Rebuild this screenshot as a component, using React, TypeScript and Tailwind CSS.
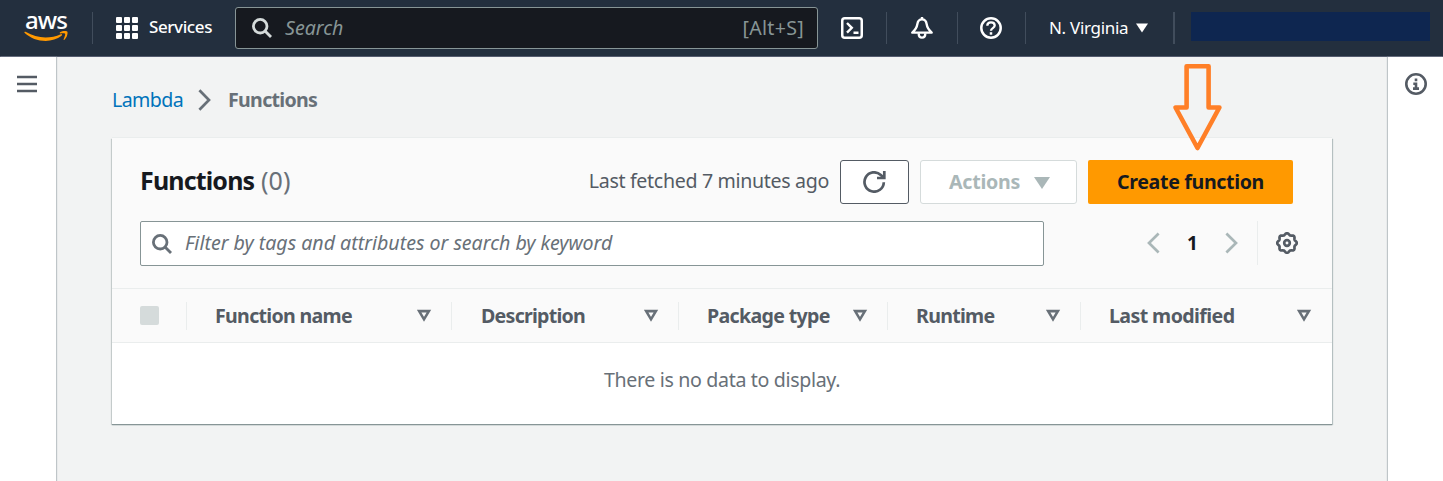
import React from 'react';

const SearchIcon = ({ className }: { className: string }) => (
  <svg className={className} width="20" height="20" viewBox="0 0 20 20" fill="none" stroke="currentColor" strokeWidth="2.8">
    <circle cx="8.2" cy="8.2" r="6.8" />
    <path d="M13 13l6 6" />
  </svg>
);

const Divider = () => <span className="h-8 w-px shrink-0 bg-[#414d5c]" />;

const columns = [
  { label: 'Function name', cell: 'w-[265px] border-r pr-[19px]', text: 'tracking-[-0.7px]' },
  { label: 'Description', cell: 'w-[227px] border-r pr-[19px]', text: 'pl-px tracking-[-0.75px]' },
  { label: 'Package type', cell: 'w-[209px] border-r pr-[19px]', text: 'tracking-[-0.67px]' },
  { label: 'Runtime', cell: 'w-[193px] border-r pr-[19px]', text: 'tracking-[-0.72px]' },
  { label: 'Last modified', cell: 'flex-1 pr-5', text: 'tracking-[-0.6px]' },
];

const gearPath = (() => {
  const points: string[] = [];
  for (let i = 0; i <= 144; i++) {
    const a = (i / 144) * Math.PI * 2;
    const r = 9 + 0.8 * Math.cos(a * 8);
    points.push(`${(11 + r * Math.sin(a)).toFixed(2)} ${(11 - r * Math.cos(a)).toFixed(2)}`);
  }
  return `M${points.join('L')}Z`;
})();

function Header() {
  return (
    <header className="flex h-[57px] shrink-0 items-center border-b border-[#545b6e] bg-[#232f3e] text-white">
      <div className="mb-[5px] ml-6 flex w-11 shrink-0 flex-col items-center">
        <span className="h-[22px] text-[24px] leading-[22px] font-medium tracking-[-0.9px]">aws</span>
        <svg width="44" height="11" viewBox="0 0 44 11" fill="#f90">
          <path d="M.4 1.2C.8.6 1.4.8 2 1.1 8 4.600 14.500 6.500 21.500 6.500c5.300 0 10.500-1.200 15.300-3.300 1-.4 1.800.7.8 1.500C33.300 8 27.300 9.900 21.800 9.900 13.700 9.900 6.300 6.900.7 1.900.4 1.600.3 1.400.4 1.200z" />
          <path d="M36 1.300C38 .1 41-.3 43.200.4c.8.500.5 5.600-2.800 8.300-.5.4-1 .2-.8-.4.8-1.900 2-4.700 1.500-5.500-.6-.8-3.300-.6-4.800-.4-.6 0-.8-.7-.3-1.100z" />
        </svg>
      </div>
      <span className="ml-6 h-8 w-px shrink-0 bg-[#414d5c]" />
      <svg className="ml-[23px] shrink-0" width="22" height="22" fill="currentColor">
        {[0, 8, 16].map((y) => [0, 8, 16].map((x) => <rect key={`${x}-${y}`} x={x} y={y} width="6" height="6" rx="1" />))}
      </svg>
      <span className="mb-[2px] ml-[11px] w-[86px] shrink-0 text-[17px] font-medium tracking-[-0.4px] whitespace-nowrap">Services</span>
      <div className="flex h-[42px] w-[583px] shrink-0 items-center rounded-[3px] border border-[#879596] bg-[#16191f] px-4">
        <SearchIcon className="text-[#d5dbdb]" />
        <span className="ml-[13px] flex-1 text-[19.600px] text-[#879596] italic">Search</span>
        <span className="-mr-[3px] text-[19.600px] tracking-[0.3px] text-[#879596]">[Alt+S]</span>
      </div>
      <svg className="mr-[23px] ml-[23px] shrink-0" width="22" height="22" viewBox="0 0 22 22" fill="none" stroke="currentColor" strokeWidth="2.500">
        <rect x="1.250" y="1.250" width="19.500" height="19.500" rx="2.500" />
        <path d="M6 6l4.800 4.800L6 15.600M12.500 15.700h5" strokeWidth="2.400" />
      </svg>
      <Divider />
      <svg className="mr-6 ml-6 shrink-0" width="22" height="22" viewBox="0 0 22 22" fill="none" stroke="currentColor" strokeWidth="2.400" strokeLinejoin="round">
        <path d="M11 0v3" />
        <path d="M11 2.400c-2.800 0-4.200 1.900-4.600 4.500C5.900 10.500 4.800 12.500 1.300 15.600h19.400c-3.500-3.100-4.600-5.100-5.100-8.700-.4-2.600-1.800-4.500-4.600-4.500z" />
        <path d="M7.700 16.200c0 2.700 1.300 4.400 3.300 4.400s3.300-1.700 3.300-4.400" />
      </svg>
      <Divider />
      <svg className="mr-[23px] ml-[22px] shrink-0" width="22" height="22" viewBox="0 0 22 22" fill="none" stroke="currentColor" strokeWidth="2.500">
        <circle cx="11" cy="11" r="9.700" />
        <path d="M7.300 8.800c0-2.200 1.500-3.400 3.700-3.400s3.700 1.200 3.700 3.100c0 2.700-3.700 2.500-3.700 5.200" strokeWidth="2.300" />
        <path d="M11 15.200v2.500" />
      </svg>
      <Divider />
      <span className="ml-[23px] w-[87px] shrink-0 text-[17px] tracking-[-0.3px] whitespace-nowrap">N. Virginia</span>
      <svg className="shrink-0" width="12" height="10" fill="currentColor"><path d="M0 .5h12L6 9.500z" /></svg>
      <span className="ml-[25px] h-8 w-0.5 shrink-0 bg-[#414d5c]" />
      <span className="mb-[3px] ml-4 h-[29px] w-[239px] shrink-0 bg-[#0e2650]" />
    </header>
  );
}

function FunctionsCard() {
  return (
    <section className="h-[286px] w-[1220px] bg-white shadow-[0_1px_1px_0_#879596,1px_1px_1px_0_#bfc8c9,-1px_1px_1px_0_#d0d6d6,0_-1px_0_0_#eaeded]">
      <div className="h-[151px] border-b border-[#eaeded] bg-[#fafafa] px-7 pt-[22px]">
        <div className="flex h-11 items-center pr-[11px]">
          <h1 className="mb-[2px] flex-1 text-[25px] font-bold tracking-[-0.85px] text-[#16191f]">
            Functions <span className="ml-px font-normal tracking-[0.2px] text-[#687078]">(0)</span>
          </h1>
          <span className="mb-[2px] text-[19.600px] tracking-[-0.33px] text-[#545b64]">Last fetched 7 minutes ago</span>
          <button className="ml-[11px] flex h-11 w-[69px] items-center justify-center rounded-[3px] border border-[#545b64] bg-white text-[#545b64]">
            <svg width="23" height="22" viewBox="0 0 23 22" fill="none" stroke="currentColor" strokeWidth="2.700">
              <path d="M20.800 11.200a9.650 9.650 0 1 1-3-7.200L20.500 6.500" />
              <path d="M21.300 0v7h-7.300" />
            </svg>
          </button>
          <button className="ml-[11px] flex h-11 w-[157px] items-center rounded-[3px] border border-[#d5dbdb] bg-white pl-7 text-[#aab7b8]">
            <span className="w-[85px] text-left text-[19.600px] font-bold tracking-[-0.25px]">Actions</span>
            <svg width="16" height="13" fill="currentColor"><path d="M0 1h16L8 13z" /></svg>
          </button>
          <button className="ml-[11px] h-11 w-[205px] rounded-[2px] bg-[#f90] text-[19.600px] font-bold tracking-[-0.35px] text-[#16191f]">
            Create function
          </button>
        </div>
        <div className="mt-[17px] flex h-[45px] items-center">
          <div className="flex h-[45px] w-[904px] items-center rounded-[2px] border border-[#879596] bg-white pl-[11px] text-[#687078]">
            <SearchIcon className="" />
            <span className="mb-[2px] ml-[13px] text-[19.600px] tracking-[-0.01px] italic">Filter by tags and attributes or search by keyword</span>
          </div>
          <svg className="mb-[2px] ml-[102px]" width="14" height="22" fill="none" stroke="#aab7b8" strokeWidth="2.700"><path d="M12.600 1.500L3 11l9.600 9.500" /></svg>
          <span className="w-[65px] text-center text-[19px] font-bold text-[#16191f]">1</span>
          <svg className="mb-[2px]" width="14" height="22" fill="none" stroke="#aab7b8" strokeWidth="2.700"><path d="M1.400 1.500L11 11l-9.600 9.500" /></svg>
          <span className="mb-[2px] ml-[18px] h-11 w-px bg-[#eaeded]" />
          <svg className="mb-[2px] ml-[18px]" width="22" height="22" viewBox="0 0 22 22" fill="none" stroke="#545b64" strokeWidth="2.700">
            <path d={gearPath} />
            <circle cx="11" cy="11" r="2.800" />
          </svg>
        </div>
      </div>
      <div className="flex h-[54px] items-center border-b border-[#eaeded] bg-[#fafafa]">
        <div className="flex h-7 w-[75px] items-center border-r border-[#eaeded] pl-7">
          <span className="size-[19px] rounded-[2px] bg-[#d5dbdb]" />
        </div>
        {columns.map((c) => (
          <div key={c.label} className={`flex h-7 items-center justify-between border-[#eaeded] pl-7 ${c.cell}`}>
            <span className={`text-[19.600px] font-bold whitespace-nowrap text-[#545b64] ${c.text}`}>{c.label}</span>
            <svg width="15" height="13" viewBox="0 0 15 13" fill="none" stroke="#687078" strokeWidth="2.600"><path d="M2.100 2.100h9.800L7 10.300z" /></svg>
          </div>
        ))}
      </div>
      <p className="pt-[22px] text-center text-[19.600px] leading-[30px] tracking-[-0.34px] text-[#687078]">There is no data to display.</p>
    </section>
  );
}

export default function App() {
  return (
    <div className="relative flex h-[481px] w-[1443px] flex-col overflow-hidden bg-[#f2f3f3] font-['Noto_Sans',sans-serif]">
      <Header />
      <div className="flex flex-1">
        <aside className="w-14 bg-white pt-[18px] pl-[17px] shadow-[1px_0_1px_0_#bfc5c8]">
          <svg width="21" height="19" stroke="#545b64" strokeWidth="2.700"><path d="M0 2h20M0 9h20M0 16h20" /></svg>
        </aside>
        <main className="flex-1 pl-14">
          <nav className="flex h-[81px] items-center pt-[5px] text-[19.600px]">
            <span className="w-[86px] tracking-[-0.6px] text-[#0073bb]">Lambda</span>
            <svg width="14" height="22" fill="none" stroke="#687078" strokeWidth="2.700"><path d="M1.400 1.200L11 11l-9.600 9.800" /></svg>
            <span className="ml-4 font-bold tracking-[-0.7px] text-[#687078]">Functions</span>
          </nav>
          <FunctionsCard />
        </main>
        <aside className="w-[55px] bg-white pt-4 pl-[17px] shadow-[-1px_0_1px_0_#bfc5c8]">
          <svg width="22" height="22" viewBox="0 0 22 22" fill="none" stroke="#545b64" strokeWidth="2.600">
            <circle cx="11" cy="11" r="9.700" />
            <path d="M11 5.500v2.700M8.300 10.800H11v4.500M8 15.600h6" />
          </svg>
        </aside>
      </div>
      <svg className="absolute top-[63px] left-[1172px]" width="52" height="90" fill="none" stroke="#ff7f27" strokeWidth="4.600" strokeLinejoin="round">
        <path d="M14.600 3.300H36.600V44.500H47.400L25.500 85 3.500 44.500H14.600z" />
      </svg>
    </div>
  );
}
